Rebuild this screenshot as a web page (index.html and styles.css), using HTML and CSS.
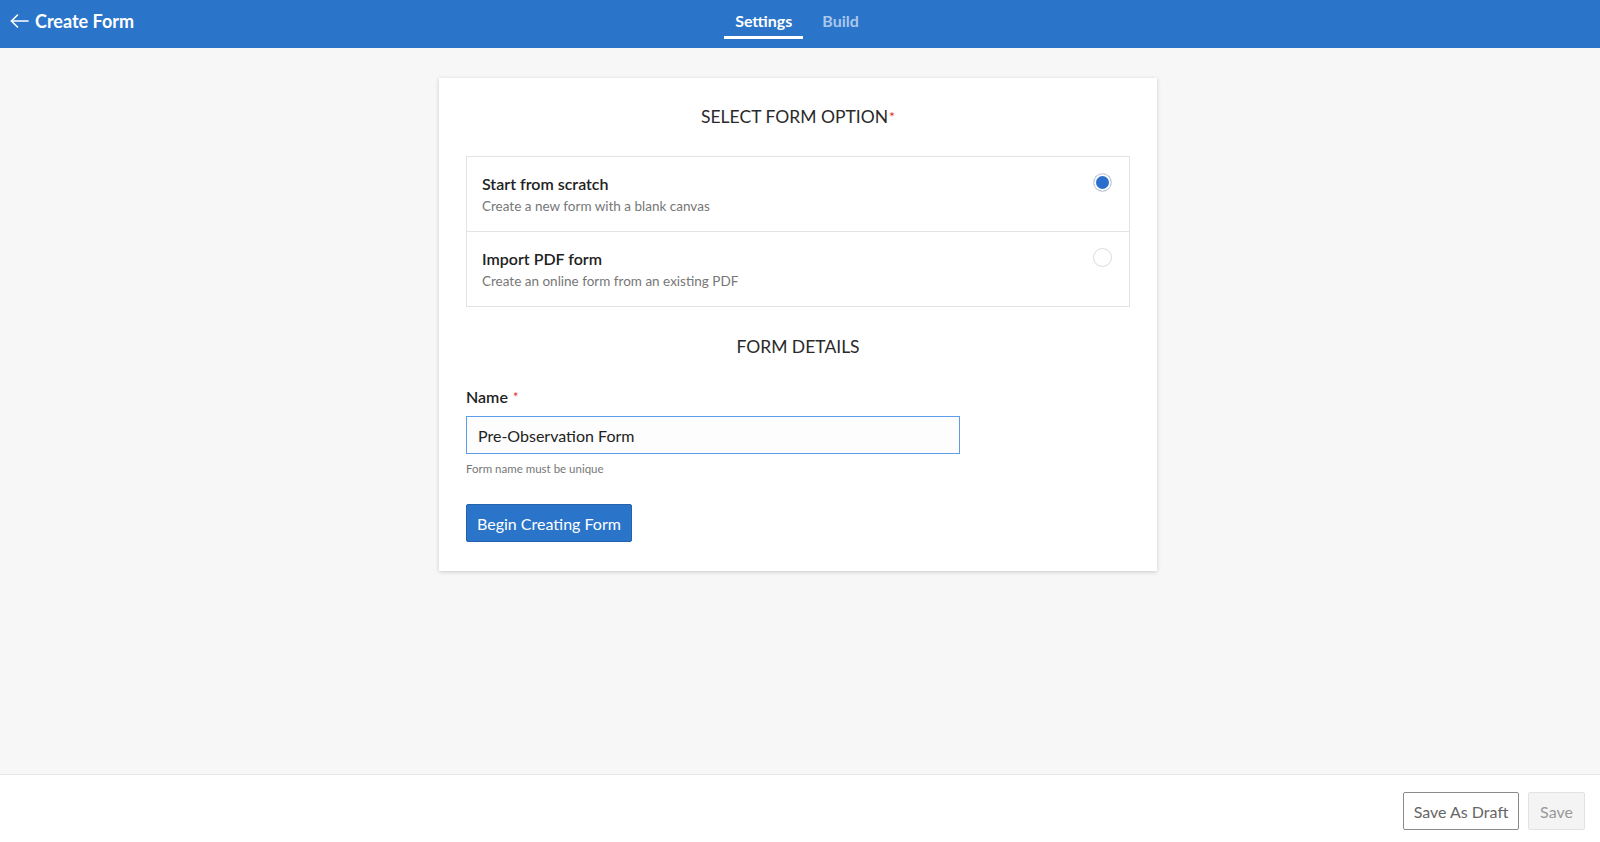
FILE: index.html
```html
<!DOCTYPE html>
<html lang="en">
<head>
    <meta charset="UTF-8">
    <meta name="viewport" content="width=device-width, initial-scale=1.0">
    <title>Create Form</title>
    <link rel="stylesheet" href="styles.css">
</head>
<body>
    <div class="page">
        <!-- header -->
        <header class="top-bar">
            <div class="top-left">
                <svg class="back-icon" width="19" height="14" viewBox="0 0 19 14" fill="none" stroke="#fff" stroke-width="1.6" stroke-linecap="round" stroke-linejoin="round">
                    <path d="M18 7H1.5"/>
                    <path d="M7.5 1L1.5 7l6 6"/>
                </svg>
                <span class="page-title">Create Form</span>
            </div>
            <nav class="tabs">
                <span class="tab active">Settings</span>
                <span class="tab">Build</span>
            </nav>
            <div></div>
        </header>

        <!-- content -->
        <main class="content">
            <section class="card">
                <h2 class="section-title">SELECT FORM OPTION<span class="req">*</span></h2>

                <div class="option-list">
                    <div class="option">
                        <div>
                            <div class="option-title">Start from scratch</div>
                            <div class="option-desc">Create a new form with a blank canvas</div>
                        </div>
                        <span class="radio checked"></span>
                    </div>
                    <div class="option">
                        <div>
                            <div class="option-title">Import PDF form</div>
                            <div class="option-desc">Create an online form from an existing PDF</div>
                        </div>
                        <span class="radio"></span>
                    </div>
                </div>

                <h2 class="section-title details-title">FORM DETAILS</h2>

                <label class="field-label">Name <span class="req">*</span></label>
                <input class="text-input" type="text" value="Pre-Observation Form">
                <div class="help-text">Form name must be unique</div>

                <button class="btn-primary">Begin Creating Form</button>
            </section>
        </main>

        <!-- footer -->
        <footer class="bottom-bar">
            <button class="btn-outline">Save As Draft</button>
            <button class="btn-disabled">Save</button>
        </footer>
    </div>
</body>
</html>
```

FILE: styles.css
```css
/*global*/
* {
    margin: 0;
    padding: 0;
    box-sizing: border-box;
}

body {
    font-family: Lato, "Open Sans", Arial, sans-serif;
    color: #222;
}

.page {
    height: 100vh;
    display: flex;
    flex-direction: column;
}

/*header*/
.top-bar {
    height: 48px;
    background-color: #2a74c9;
    display: grid;
    grid-template-columns: 1fr auto 1fr;
    align-items: start;
    color: #fff;
}

.top-left {
    display: flex;
    align-items: center;
    gap: 6px;
    height: 42px;
    padding-left: 10px;
}

.page-title {
    font-size: 18px;
    font-weight: bold;
}

.tabs {
    display: flex;
    gap: 8px;
    margin-left: -6px;
}

.tab {
    font-size: 16px;
    font-weight: bold;
    line-height: 20px;
    padding: 11px 11px 5px;
    border-bottom: 3px solid transparent;
    color: #a9c8ec;
}

.tab.active {
    color: #fff;
    border-bottom-color: #fff;
}

/*content*/
.content {
    flex: 1;
    background-color: #f7f7f7;
    display: flex;
    justify-content: center;
    align-items: flex-start;
    padding: 30px 4px 0 0;
}

.card {
    width: 718px;
    background-color: #fff;
    box-shadow: 0 1px 4px rgba(0, 0, 0, 0.18);
    padding: 28px 27px 29px;
    display: flex;
    flex-direction: column;
    align-items: flex-start;
}

.section-title {
    align-self: stretch;
    text-align: center;
    font-size: 17.5px;
    font-weight: normal;
    line-height: 22px;
    color: #2a2a2a;
    margin-bottom: 28px;
}

.req {
    color: #d9302c;
    font-size: 14px;
    font-weight: normal;
    vertical-align: top;
    margin-left: 1px;
}

.option-list {
    align-self: stretch;
    border: 1px solid #e3e3e3;
}

.option {
    display: flex;
    justify-content: space-between;
    align-items: flex-start;
    padding: 17px 17px 16px 15px;
}

.option + .option {
    border-top: 1px solid #e3e3e3;
}

.option-title {
    font-size: 16px;
    font-weight: 600;
    line-height: 20px;
    color: #222;
}

.option-desc {
    font-size: 13.5px;
    line-height: 18px;
    margin-top: 3px;
    color: #777;
}

.radio {
    width: 19px;
    height: 19px;
    border-radius: 50%;
    border: 1px solid #dcdcdc;
    background-color: #fff;
    margin-top: -1px;
}

.radio.checked {
    background-color: #2a6fce;
    box-shadow: inset 0 0 0 2px #fff;
}

.details-title {
    margin-top: 29px;
    margin-bottom: 29px;
}

.field-label {
    font-size: 16px;
    font-weight: 600;
    line-height: 20px;
    color: #222;
}

.field-label .req {
    font-size: 13px;
}

.text-input {
    margin-top: 9px;
    width: 494px;
    height: 38px;
    border: 1px solid #5b9de8;
    background-color: #fdfdfd;
    padding: 0 11px;
    font-family: inherit;
    font-size: 16px;
    color: #222;
    outline: none;
}

.help-text {
    margin-top: 7px;
    font-size: 11.5px;
    line-height: 16px;
    color: #777;
}

.btn-primary {
    margin-top: 27px;
    height: 38px;
    padding: 0 10px;
    background-color: #2a74c9;
    border: 1px solid #2462ad;
    border-radius: 2px;
    color: #fff;
    font-family: inherit;
    font-size: 16px;
}

/*footer*/
.bottom-bar {
    height: 68px;
    background-color: #fff;
    border-top: 1px solid #e6e6e6;
    display: flex;
    justify-content: flex-end;
    align-items: flex-start;
    gap: 9px;
    padding: 17px 15px 0 0;
}

.bottom-bar button {
    height: 38px;
    font-family: inherit;
    font-size: 16px;
    border-radius: 2px;
}

.btn-outline {
    width: 116px;
    background-color: #fff;
    border: 1px solid #8a8a8a;
    color: #666;
}

.btn-disabled {
    width: 57px;
    background-color: #f4f4f4;
    border: 1px solid #e2e2e2;
    color: #999;
}
```
